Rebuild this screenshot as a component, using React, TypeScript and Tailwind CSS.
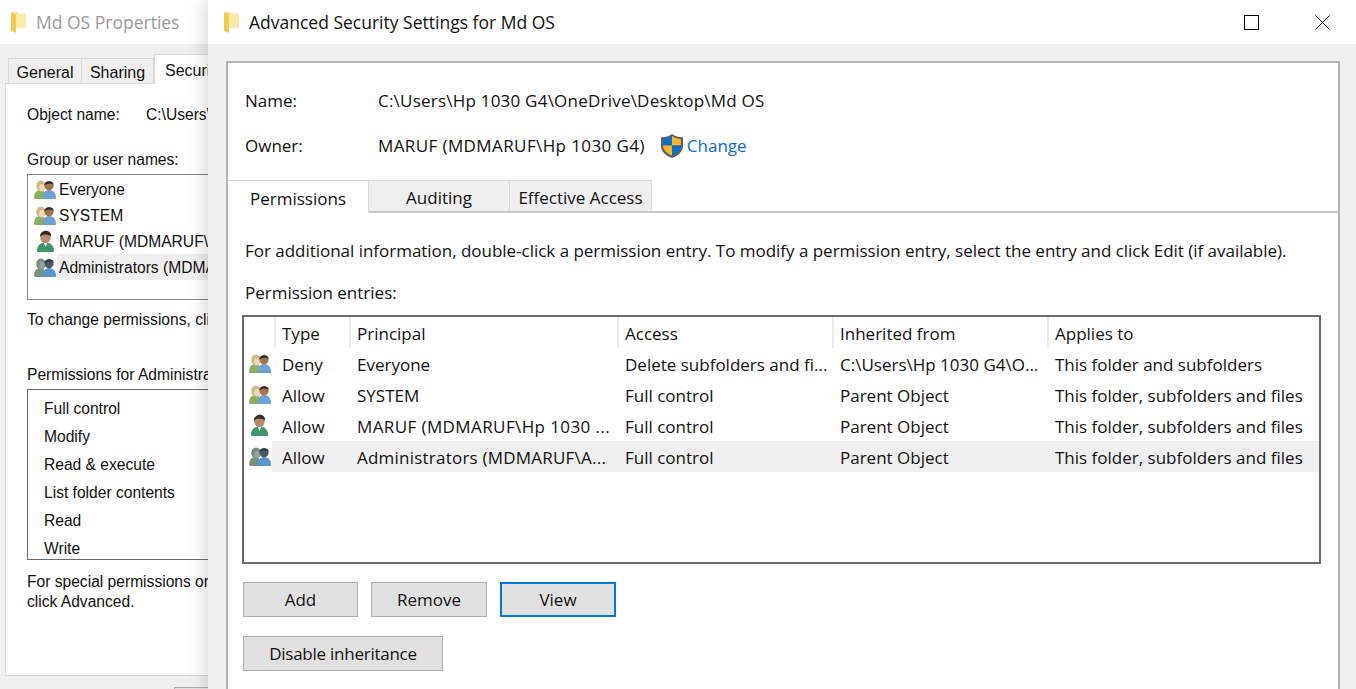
import type { ReactNode } from 'react'

const Folder = () => (
  <svg viewBox="0 0 15 21" className="w-[15px] h-[21px] shrink-0">
    <path d="M0 0h6l1 1.500h8V16H0z" fill="#fbe08a" />
    <path d="M5 2h10v14H5z" fill="#fde9a6" />
    <path d="M0 .5l5 2V21l-5-2z" fill="#f3c952" />
  </svg>
)

const Shield = () => (
  <svg viewBox="0 0 22 24" className="w-[22px] h-[24px] shrink-0">
    <path d="M11 0c3 2.200 6.500 3.200 11 3.400V11.500c0 6-4.500 10.200-11 12.500C4.500 21.700 0 17.500 0 11.500V3.400C4.500 3.200 8 2.200 11 0z" fill="#5b6066" />
    <path d="M11 2v9.500H2V5.200C5.400 4.900 8.400 3.900 11 2z" fill="#0a6fc9" />
    <path d="M11 2c2.600 1.900 5.600 2.900 9 3.200v6.300h-9z" fill="#fbb62d" />
    <path d="M2 11.500h9v10C6 19.800 2.200 16.300 2 11.500z" fill="#fbb62d" />
    <path d="M11 11.500h9c-.2 4.800-4 8.300-9 10z" fill="#0a6fc9" />
  </svg>
)

const GroupIcon = ({ muted = false }: { muted?: boolean }) => (
  <svg viewBox="0 0 22 19" className="w-[22px] h-[19px] shrink-0">
    <path d="M0 18c0-4.500 1.500-7 4.500-7.500h4c2 .5 3 3 3 7.500l-1 1H1z" fill={muted ? '#6f9478' : '#8ab05a'} />
    <ellipse cx="7" cy="6" rx="4.800" ry="5.500" fill={muted ? '#7d8a84' : '#cdbb85'} />
    <path d="M6 4.500c2-.5 4-.5 5 .5.500 3-1 6.500-3 6.500-1.500 0-2.500-1.500-3-3z" fill={muted ? '#97a39d' : '#eed9b6'} />
    <path d="M8.500 18.500c0-5 2.500-8.500 6.500-8.500 4.500 0 7 3.500 7 8 0 .6-.4 1-1 1H9.500c-.6 0-1-.0-1-.5z" fill={muted ? '#5b93cf' : '#6f9fd4'} />
    <circle cx="15" cy="5.800" r="4.600" fill={muted ? '#4f5a62' : '#a5714a'} />
    <path d="M10.300 5.500C10 .4 19.700-.8 19.800 5c-1.500-1.600-6.500-2-9.500.5z" fill={muted ? '#2b3a4a' : '#2f2b28'} />
  </svg>
)

const UserIcon = () => (
  <svg viewBox="0 0 17 22" className="w-[17px] h-[22px] shrink-0">
    <path d="M0 21c0-5 3-8.500 8.500-8.500S17 16 17 21c0 .6-.4 1-1 1H1c-.6 0-1-.4-1-1z" fill="#3c9669" />
    <path d="M6.500 12.500h4L8.700 17z" fill="#e6efe9" />
    <ellipse cx="8.500" cy="7.200" rx="5.200" ry="6" fill="#b98a6a" />
    <path d="M3 7C2.500 -.8 14.800-1.800 14 6.500 12.500 4.500 6.500 3.800 4.500 5.500z" fill="#2d2a27" />
  </svg>
)

const Btn = ({ children, className }: { children: ReactNode; className: string }) => (
  <button className={`block h-[35px] bg-[#e1e1e1] text-[#111] pt-[1px] ${className}`}>{children}</button>
)

const columns = ['Type', 'Principal', 'Access', 'Inherited from', 'Applies to']

const rows = [
  { icon: <GroupIcon />, principalClass: '', cells: ['Deny', 'Everyone', 'Delete subfolders and fi...', 'C:\\Users\\Hp 1030 G4\\O...', 'This folder and subfolders'] },
  { icon: <GroupIcon />, principalClass: '', cells: ['Allow', 'SYSTEM', 'Full control', 'Parent Object', 'This folder, subfolders and files'] },
  { icon: <UserIcon />, principalClass: 'tracking-[0.4px]', cells: ['Allow', 'MARUF (MDMARUF\\Hp 1030 ...', 'Full control', 'Parent Object', 'This folder, subfolders and files'] },
  { icon: <GroupIcon muted />, principalClass: 'tracking-[0.22px]', cells: ['Allow', 'Administrators (MDMARUF\\A...', 'Full control', 'Parent Object', 'This folder, subfolders and files'], selected: true },
]

function PropertiesWindow() {
  const users = [
    { name: 'Everyone', icon: <GroupIcon /> },
    { name: 'SYSTEM', icon: <GroupIcon /> },
    { name: 'MARUF (MDMARUF\\Hp 1030 G4)', icon: <UserIcon /> },
    { name: 'Administrators (MDMARUF\\Administrators)', icon: <GroupIcon muted />, selected: true },
  ]
  const perms = ['Full control', 'Modify', 'Read & execute', 'List folder contents', 'Read', 'Write']
  return (
    <div className="w-[208px] shrink-0 h-full overflow-hidden bg-[#efefef] font-['Liberation_Sans',sans-serif] text-[15.6px] text-[#111] whitespace-nowrap">
      <div className="h-[44px] bg-white flex items-center pl-[11px]">
        <Folder />
        <span className="ml-[10px] text-[17.500px] text-[#9a9a9a] font-['Open_Sans',sans-serif]">Md OS Properties</span>
      </div>
      <div className="flex items-end h-[39px] pl-[8px] text-[16px]">
        <div className="w-[74px] shrink-0 h-[25px] bg-[#efefef] border border-b-0 border-[#d9d9d9] flex items-center justify-center pt-[3px]">General</div>
        <div className="w-[72px] shrink-0 h-[25px] bg-[#efefef] border border-l-0 border-b-0 border-[#d9d9d9] flex items-center justify-center pt-[3px]">Sharing</div>
        <div className="w-[90px] shrink-0 h-[30px] bg-white border border-b-0 border-[#d9d9d9] pl-[10px] pt-[4px] -mb-[1px] relative z-10">Security</div>
      </div>
      <div className="ml-[5px] w-[400px] h-[593px] bg-white border border-[#d9d9d9] pl-[21px]">
        <div className="flex pt-[19px] h-[56px]">
          <span className="w-[119px] shrink-0">Object name:</span>
          <span>C:\Users\Hp 1030 G4</span>
        </div>
        <div className="mt-[8px] h-[20px]">Group or user names:</div>
        <div className="mt-[6px] w-[300px] h-[126px] border border-[#828790] pl-[6px] pt-[1px]">
          {users.map(u => (
            <div key={u.name} className="flex items-center h-[26px]">
              <span className="w-[23px] shrink-0 flex justify-center pr-[1px]">{u.icon}</span>
              <span className={`pl-[2px] pt-[2px] h-[26px] flex-1 flex items-center ${u.selected ? 'bg-[#efefef]' : ''}`}>{u.name}</span>
            </div>
          ))}
        </div>
        <div className="mt-[8px] h-[20px]">To change permissions, click Edit.</div>
        <div className="mt-[35px] h-[20px]">Permissions for Administrators</div>
        <div className="mt-[6px] w-[300px] h-[171px] border border-[#6b6b6b] pl-[16px] pt-[5px]">
          {perms.map(p => (
            <div key={p} className="h-[28px] flex items-center">{p}</div>
          ))}
        </div>
        <div className="mt-[12px] leading-[20px]">
          For special permissions or advanced settings,
          <br />
          click Advanced.
        </div>
      </div>
      <div className="mt-[11px] ml-[174px] w-[90px] h-[20px] bg-[#e1e1e1] border border-[#adadad]" />
    </div>
  )
}

function SecurityWindow() {
  return (
    <div className="flex-1 h-full relative z-10 bg-[#efefef] shadow-[-5px_0_14px_rgba(0,0,0,0.14)] font-['Open_Sans',sans-serif] text-[17px] text-[#111] whitespace-nowrap">
      <div className="h-[44px] bg-white flex items-center pl-[16px]">
        <Folder />
        <span className="ml-[10px] text-[17.500px]">Advanced Security Settings for Md OS</span>
        <div className="ml-auto flex items-center pr-[26px] gap-[56px]">
          <span className="w-[15px] h-[15px] border border-black" />
          <svg viewBox="0 0 15 15" className="w-[15px] h-[15px]">
            <path d="M.5.5l14 14M14.500.500l-14 14" stroke="#000" strokeWidth="1" />
          </svg>
        </div>
      </div>
      <div className="mt-[17px] ml-[18px] mr-[16px] h-[640px] bg-white border-2 border-b-0 border-[#b5b5b5]">
        <div className="flex items-center h-[24px] mt-[26px] pl-[17px]">
          <span className="w-[133px]">Name:</span>
          <span className="tracking-[0.22px]">C:\Users\Hp 1030 G4\OneDrive\Desktop\Md OS</span>
        </div>
        <div className="flex items-center h-[24px] mt-[21px] pl-[17px]">
          <span className="w-[133px]">Owner:</span>
          <span className="tracking-[0.4px]">MARUF (MDMARUF\Hp 1030 G4)</span>
          <span className="ml-[16px]"><Shield /></span>
          <span className="ml-[4px] text-[#0a6ccf]">Change</span>
        </div>
        <div className="flex items-end h-[32px] mt-[23px] border-b-2 border-[#c8c8c8]">
          <div className="w-[141px] shrink-0 h-[33px] -mb-[2px] bg-white border-t border-r border-[#d9d9d9] flex items-center justify-center pt-[3px] relative z-10">Permissions</div>
          <div className="w-[141px] shrink-0 h-[31px] bg-[#efefef] border-t border-r border-[#d9d9d9] flex items-center justify-center pt-[4px]">Auditing</div>
          <div className="w-[142px] shrink-0 h-[31px] bg-[#efefef] border-t border-r border-[#d9d9d9] flex items-center justify-center pt-[4px]">Effective Access</div>
        </div>
        <div className="pl-[17px] mt-[25px] h-[26px] flex items-center tracking-[-0.025px]">For additional information, double-click a permission entry. To modify a permission entry, select the entry and click Edit (if available).</div>
        <div className="pl-[17px] mt-[17px] h-[24px] flex items-center">Permission entries:</div>
        <div className="mt-[10px] ml-[14px] w-[1079px] h-[249px] border-2 border-[#6b6b6b]">
          <div className="grid grid-cols-[32px_75px_268px_215px_215px_1fr] h-[31px]">
            <div className="border-r-2 border-[#ececec]" />
            {columns.map((c, i) => (
              <div key={c} className={`pl-[6px] pt-[3px] flex items-center ${i < 4 ? 'border-r-2 border-[#ececec]' : ''}`}>{c}</div>
            ))}
          </div>
          {rows.map(r => (
            <div key={r.cells[1]} className="grid grid-cols-[28px_79px_268px_215px_215px_1fr] h-[31px]">
              <div className="flex items-center justify-center -mt-[1px] pl-[3px]">{r.icon}</div>
              {r.cells.map((c, i) => (
                <div key={i} className={`${i === 0 ? 'pl-[10px]' : 'pl-[6px]'} pt-[3px] flex items-center ${i === 1 ? r.principalClass : ''} ${r.selected ? 'bg-[#efefef]' : ''}`}>{c}</div>
              ))}
            </div>
          ))}
        </div>
        <div className="flex mt-[18px] ml-[15px] gap-[13px]">
          <Btn className="w-[115px] border border-[#adadad]">Add</Btn>
          <Btn className="w-[116px] border border-[#adadad]">Remove</Btn>
          <Btn className="w-[116px] border-2 border-[#0078d7]">View</Btn>
        </div>
        <Btn className="w-[200px] mt-[19px] ml-[15px] border border-[#adadad] tracking-[-0.25px]">Disable inheritance</Btn>
      </div>
    </div>
  )
}

export default function App() {
  return (
    <div className="w-[1356px] h-[689px] flex overflow-hidden bg-white">
      <PropertiesWindow />
      <SecurityWindow />
    </div>
  )
}
